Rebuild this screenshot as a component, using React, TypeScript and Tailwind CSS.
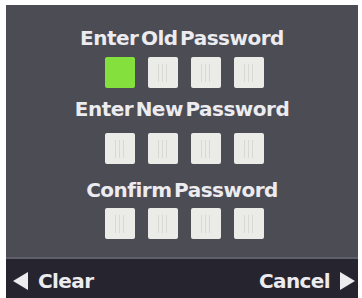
const Square = ({ active }: { active?: boolean }) => (
  <div
    className={
      active
        ? 'w-[30px] h-[31px] rounded-[2px] bg-[#84e03c]'
        : 'w-[30px] h-[31px] rounded-[2px] bg-[#ebebe8] flex items-center justify-center gap-[3px]'
    }
  >
    {!active && (
      <>
        <span className="w-px h-[18px] bg-[#d8d8d4]" />
        <span className="w-px h-[18px] bg-[#d8d8d4]" />
        <span className="w-px h-[18px] bg-[#d8d8d4]" />
      </>
    )}
  </div>
);

const Row = ({ first }: { first?: boolean }) => (
  <div className="flex gap-[13px] ml-[4px]">
    <Square active={first} />
    <Square />
    <Square />
    <Square />
  </div>
);

const title =
  'text-[#ecebef] text-[20px] leading-[20px] font-bold tracking-[-0.5px] [word-spacing:-4px]';

export default function App() {
  return (
    <div
      className="w-[362px] h-[298px] bg-white pt-[5px] pl-[6px] pr-[4px] flex flex-col"
      style={{ fontFamily: '"DejaVu Sans", Verdana, sans-serif' }}
    >
      <div className="flex-1 bg-[#4b4c54] flex flex-col items-center pt-[23px]">
        <div className={title}>Enter Old Password</div>
        <div className="mt-[9px]">
          <Row first />
        </div>
        <div className={`${title} mt-[11px]`}>Enter New Password</div>
        <div className="mt-[14px]">
          <Row />
        </div>
        <div className={`${title} mt-[16px]`}>Confirm Password</div>
        <div className="mt-[8px]">
          <Row />
        </div>
      </div>
      <div className="h-[2px] bg-[#5e5f68]" />
      <div className="h-[39px] bg-[#25242f] flex items-center justify-between pt-[4px] pl-[7px] pr-[3px] text-[#ecebef] text-[20px] font-bold tracking-[-0.6px]">
        <div className="flex items-center gap-[10px]">
          <span className="w-0 h-0 border-y-[9px] border-y-transparent border-r-[15px] border-r-[#ecebef]" />
          <span>Clear</span>
        </div>
        <div className="flex items-center gap-[10px]">
          <span>Cancel</span>
          <span className="w-0 h-0 border-y-[9px] border-y-transparent border-l-[15px] border-l-[#ecebef]" />
        </div>
      </div>
    </div>
  );
}
